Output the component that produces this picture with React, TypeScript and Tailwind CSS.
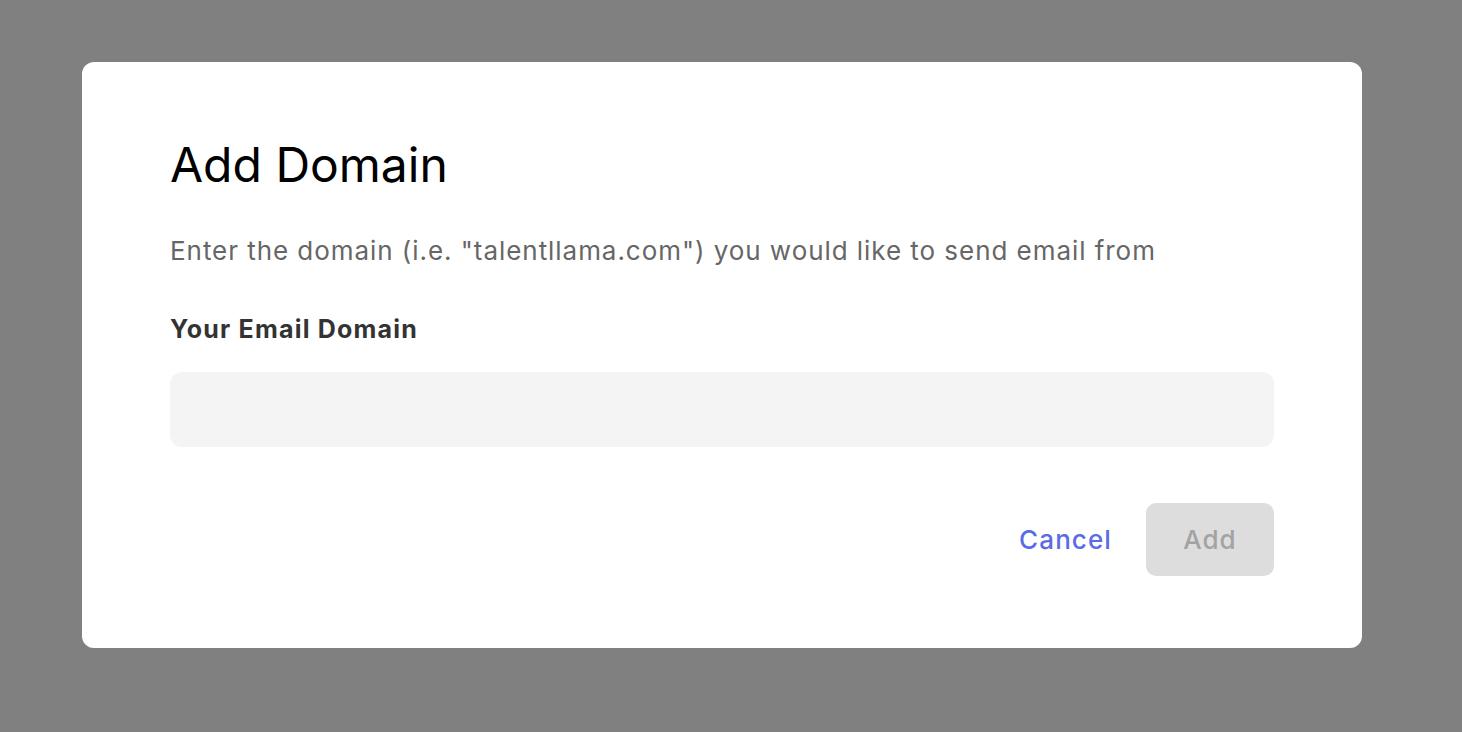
export default function App() {
  return (
    <div className="min-h-screen w-full bg-[#808080] font-['Inter','Liberation_Sans',sans-serif]">
      <div className="pl-[82px] pt-[62px]">
        <div className="w-[1280px] rounded-[12px] bg-white px-[88px] pt-[74px] pb-[72px]">
          <h1 className="text-[48px] leading-[58px] font-normal text-black">Add Domain</h1>
          <p className="mt-[41px] text-[26px] leading-[32px] tracking-[0.95px] text-[#666666]">
            Enter the domain (i.e. &quot;talentllama.com&quot;) you would like to send email from
          </p>
          <label
            htmlFor="domain"
            className="mt-[48px] block text-[25px] leading-[29px] font-bold tracking-[1.2px] text-[#333333]"
          >
            Your Email Domain
          </label>
          <input
            id="domain"
            className="mt-[28px] block h-[75px] w-full rounded-[12px] bg-[#f4f4f4] px-5 text-[24px] outline-none"
          />
          <div className="mt-[56px] flex items-center justify-end gap-[34px]">
            <button className="text-[26px] font-medium tracking-[1.1px] text-[#5a6be6]">Cancel</button>
            <button
              disabled
              className="h-[73px] w-[128px] rounded-[10px] bg-[#dddddd] text-[26px] font-medium tracking-[1px] text-[#a3a3a3]"
            >
              Add
            </button>
          </div>
        </div>
      </div>
    </div>
  );
}
